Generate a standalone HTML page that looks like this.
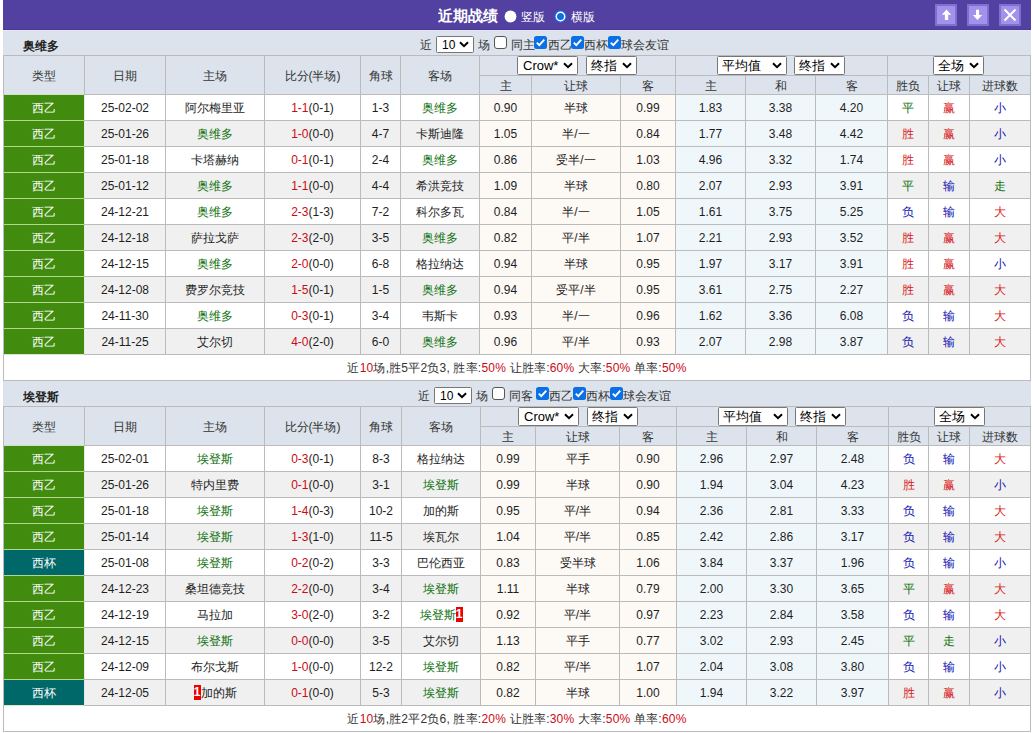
<!DOCTYPE html>
<html><head><meta charset="utf-8"><style>
html,body{margin:0;padding:0;background:#fff;width:1033px;height:733px;overflow:hidden}
body{position:relative;font-family:"Liberation Sans",sans-serif;font-size:12px}
body>div{position:absolute;box-sizing:border-box;white-space:nowrap;overflow:hidden}
.t{white-space:nowrap}
.ic{line-height:0}
svg{display:block}
.sel{background:#fff;border:1px solid #767676;border-radius:1.5px;box-sizing:content-box!important;color:#000}
.rc{display:inline-block;background:#e00;color:#fff;font-weight:bold;width:7px;height:15px;line-height:15px;font-size:12px;vertical-align:middle;text-align:center;overflow:hidden;position:relative;top:-1px}
</style></head><body>
<div style="left:3px;top:0px;width:1028px;height:30px;background:#5241a0"></div>
<div style="left:3px;top:29px;width:1028px;height:1px;background:#4a3a96"></div>
<div style="left:3px;top:30px;width:1028px;height:1px;background:#e6e6fa"></div>
<div class="t" style="left:438px;top:7px;font-weight:bold;font-size:15px;line-height:17px;color:#fff">近期战绩</div>
<div class="ic" style="left:504px;top:10px"><svg width="13" height="13" viewBox="0 0 13 13"><circle cx="6.5" cy="6.5" r="5.9" fill="#fff"/></svg></div>
<div class="t" style="left:521px;top:9px;font-size:12px;line-height:16px;color:#fff">竖版</div>
<div class="ic" style="left:554px;top:10px"><svg width="13" height="13" viewBox="0 0 13 13"><circle cx="6.5" cy="6.5" r="6" fill="#1a6fe0"/><circle cx="6.5" cy="6.5" r="4.9" fill="#fff"/><circle cx="6.5" cy="6.5" r="3.5" fill="#0b6fe6"/></svg></div>
<div class="t" style="left:571px;top:9px;font-size:12px;line-height:16px;color:#fff">横版</div>
<div style="left:935px;top:4px;width:22px;height:22px;background:#7f70cf"></div>
<div style="left:937px;top:6px;width:18px;height:18px;background:#a292ec"></div>
<div class="ic" style="left:935px;top:4px"><svg width="22" height="22" viewBox="0 0 22 22"><path d="M11.5 5.5L16.2 10.8H13.2V16.1H9.9V10.8H6.8Z" fill="#fff"/></svg></div>
<div style="left:967px;top:4px;width:22px;height:22px;background:#7f70cf"></div>
<div style="left:969px;top:6px;width:18px;height:18px;background:#a292ec"></div>
<div class="ic" style="left:967px;top:4px"><svg width="22" height="22" viewBox="0 0 22 22"><path d="M10.5 15.9L15.1 11.1H12V5.8H9V11.1H5.9Z" fill="#fff"/></svg></div>
<div style="left:999px;top:4px;width:22px;height:22px;background:#7f70cf"></div>
<div style="left:1001px;top:6px;width:18px;height:18px;background:#a292ec"></div>
<div class="ic" style="left:999px;top:4px"><svg width="22" height="22" viewBox="0 0 22 22"><path d="M5.5 5.5L16.5 16.5M16.5 5.5L5.5 16.5" stroke="#fff" stroke-width="2"/></svg></div>
<div style="left:3px;top:31px;width:1028px;height:24px;background:#dce3ec"></div>
<div class="t" style="left:23px;top:38px;font-weight:bold;font-size:12px;line-height:16px;color:#222">奥维多</div>
<div class="t" style="left:420px;top:37px;font-size:12px;line-height:16px;color:#333">近</div>
<div class="sel" style="left:436px;top:36px;width:36px;height:15px;font-size:12px;font-family:"Liberation Mono",monospace"><span style="position:absolute;left:5px;top:1px;line-height:15px">10</span><span style="position:absolute;right:4px;top:4px;line-height:0"><svg width="10" height="7" viewBox="0 0 10 7"><path d="M1 1.2L5 5.2L9 1.2" fill="none" stroke="#000" stroke-width="2"/></svg></span></div>
<div class="t" style="left:478px;top:37px;font-size:12px;line-height:16px;color:#333">场</div>
<div class="ic" style="left:494px;top:36px"><svg width="13" height="13" viewBox="0 0 13 13"><rect x="0.5" y="0.5" width="12" height="12" rx="2.5" fill="#fff" stroke="#555" stroke-width="1"/></svg></div>
<div class="t" style="left:511px;top:37px;font-size:12px;line-height:16px;color:#333">同主</div>
<div class="ic" style="left:534px;top:36px"><svg width="13" height="13" viewBox="0 0 13 13"><rect x="0" y="0" width="13" height="13" rx="2.5" fill="#0b6fe6"/><path d="M2.8 6.6L5.3 9.1L10.3 3.6" fill="none" stroke="#fff" stroke-width="1.9"/></svg></div>
<div class="t" style="left:548px;top:37px;font-size:12px;line-height:16px;color:#333">西乙</div>
<div class="ic" style="left:571px;top:36px"><svg width="13" height="13" viewBox="0 0 13 13"><rect x="0" y="0" width="13" height="13" rx="2.5" fill="#0b6fe6"/><path d="M2.8 6.6L5.3 9.1L10.3 3.6" fill="none" stroke="#fff" stroke-width="1.9"/></svg></div>
<div class="t" style="left:584px;top:37px;font-size:12px;line-height:16px;color:#333">西杯</div>
<div class="ic" style="left:608px;top:36px"><svg width="13" height="13" viewBox="0 0 13 13"><rect x="0" y="0" width="13" height="13" rx="2.5" fill="#0b6fe6"/><path d="M2.8 6.6L5.3 9.1L10.3 3.6" fill="none" stroke="#fff" stroke-width="1.9"/></svg></div>
<div class="t" style="left:621px;top:37px;font-size:12px;line-height:16px;color:#333">球会友谊</div>
<div style="left:3px;top:55px;width:1028px;height:326px;background:#bbbbbb"></div>
<div style="left:4px;top:56px;width:80px;height:38px;background:#dce3ec;text-align:center;line-height:40px;color:#333333">类型</div>
<div style="left:85px;top:56px;width:80px;height:38px;background:#dce3ec;text-align:center;line-height:40px;color:#333333">日期</div>
<div style="left:166px;top:56px;width:98px;height:38px;background:#dce3ec;text-align:center;line-height:40px;color:#333333">主场</div>
<div style="left:265px;top:56px;width:95px;height:38px;background:#dce3ec;text-align:center;line-height:40px;color:#333333">比分(半场)</div>
<div style="left:361px;top:56px;width:39px;height:38px;background:#dce3ec;text-align:center;line-height:40px;color:#333333">角球</div>
<div style="left:401px;top:56px;width:78px;height:38px;background:#dce3ec;text-align:center;line-height:40px;color:#333333">客场</div>
<div style="left:480px;top:56px;width:195px;height:19px;background:#dce3ec"></div>
<div style="left:676px;top:56px;width:211px;height:19px;background:#dce3ec"></div>
<div style="left:888px;top:56px;width:142px;height:19px;background:#dce3ec"></div>
<div style="left:480px;top:76px;width:51px;height:18px;background:#dce3ec;text-align:center;line-height:20px;color:#333333">主</div>
<div style="left:532px;top:76px;width:88px;height:18px;background:#dce3ec;text-align:center;line-height:20px;color:#333333">让球</div>
<div style="left:621px;top:76px;width:54px;height:18px;background:#dce3ec;text-align:center;line-height:20px;color:#333333">客</div>
<div style="left:676px;top:76px;width:69px;height:18px;background:#dce3ec;text-align:center;line-height:20px;color:#333333">主</div>
<div style="left:746px;top:76px;width:69px;height:18px;background:#dce3ec;text-align:center;line-height:20px;color:#333333">和</div>
<div style="left:816px;top:76px;width:71px;height:18px;background:#dce3ec;text-align:center;line-height:20px;color:#333333">客</div>
<div style="left:888px;top:76px;width:40px;height:18px;background:#dce3ec;text-align:center;line-height:20px;color:#333333">胜负</div>
<div style="left:929px;top:76px;width:40px;height:18px;background:#dce3ec;text-align:center;line-height:20px;color:#333333">让球</div>
<div style="left:970px;top:76px;width:60px;height:18px;background:#dce3ec;text-align:center;line-height:20px;color:#333333">进球数</div>
<div class="sel" style="left:517px;top:56px;width:59px;height:17px;font-size:13px;font-family:"Liberation Sans",sans-serif"><span style="position:absolute;left:5px;top:0px;line-height:17px">Crow*</span><span style="position:absolute;right:4px;top:5px;line-height:0"><svg width="10" height="7" viewBox="0 0 10 7"><path d="M1 1.2L5 5.2L9 1.2" fill="none" stroke="#000" stroke-width="2"/></svg></span></div>
<div class="sel" style="left:586px;top:56px;width:49px;height:17px;font-size:13px;font-family:"Liberation Sans",sans-serif"><span style="position:absolute;left:4px;top:0px;line-height:17px">终指</span><span style="position:absolute;right:4px;top:5px;line-height:0"><svg width="10" height="7" viewBox="0 0 10 7"><path d="M1 1.2L5 5.2L9 1.2" fill="none" stroke="#000" stroke-width="2"/></svg></span></div>
<div class="sel" style="left:717px;top:56px;width:68px;height:17px;font-size:13px;font-family:"Liberation Sans",sans-serif"><span style="position:absolute;left:4px;top:0px;line-height:17px">平均值</span><span style="position:absolute;right:4px;top:5px;line-height:0"><svg width="10" height="7" viewBox="0 0 10 7"><path d="M1 1.2L5 5.2L9 1.2" fill="none" stroke="#000" stroke-width="2"/></svg></span></div>
<div class="sel" style="left:794px;top:56px;width:49px;height:17px;font-size:13px;font-family:"Liberation Sans",sans-serif"><span style="position:absolute;left:4px;top:0px;line-height:17px">终指</span><span style="position:absolute;right:4px;top:5px;line-height:0"><svg width="10" height="7" viewBox="0 0 10 7"><path d="M1 1.2L5 5.2L9 1.2" fill="none" stroke="#000" stroke-width="2"/></svg></span></div>
<div class="sel" style="left:933px;top:56px;width:49px;height:17px;font-size:13px;font-family:"Liberation Sans",sans-serif"><span style="position:absolute;left:4px;top:0px;line-height:17px">全场</span><span style="position:absolute;right:4px;top:5px;line-height:0"><svg width="10" height="7" viewBox="0 0 10 7"><path d="M1 1.2L5 5.2L9 1.2" fill="none" stroke="#000" stroke-width="2"/></svg></span></div>
<div style="left:4px;top:95px;width:80px;height:25px;background:#418b0e;text-align:center;line-height:27px;color:#ffffff;">西乙</div>
<div style="left:85px;top:95px;width:80px;height:25px;background:#ffffff;text-align:center;line-height:27px;color:#1e1e1e;">25-02-02</div>
<div style="left:166px;top:95px;width:98px;height:25px;background:#ffffff;text-align:center;line-height:27px;color:#1e1e1e;">阿尔梅里亚</div>
<div style="left:265px;top:95px;width:95px;height:25px;background:#ffffff;text-align:center;line-height:27px;color:#1e1e1e;"><span style="color:#cc0a14">1-1</span>(0-1)</div>
<div style="left:361px;top:95px;width:39px;height:25px;background:#ffffff;text-align:center;line-height:27px;color:#1e1e1e;">1-3</div>
<div style="left:401px;top:95px;width:78px;height:25px;background:#ffffff;text-align:center;line-height:27px;color:#1e1e1e;"><span style="color:#0e700e">奥维多</span></div>
<div style="left:480px;top:95px;width:51px;height:25px;background:#fdf9f5;text-align:center;line-height:27px;color:#1e1e1e;">0.90</div>
<div style="left:532px;top:95px;width:88px;height:25px;background:#fdf9f5;text-align:center;line-height:27px;color:#1e1e1e;">半球</div>
<div style="left:621px;top:95px;width:54px;height:25px;background:#fdf9f5;text-align:center;line-height:27px;color:#1e1e1e;">0.99</div>
<div style="left:676px;top:95px;width:69px;height:25px;background:#f0f7fb;text-align:center;line-height:27px;color:#1e1e1e;">1.83</div>
<div style="left:746px;top:95px;width:69px;height:25px;background:#f0f7fb;text-align:center;line-height:27px;color:#1e1e1e;">3.38</div>
<div style="left:816px;top:95px;width:71px;height:25px;background:#f0f7fb;text-align:center;line-height:27px;color:#1e1e1e;">4.20</div>
<div style="left:888px;top:95px;width:40px;height:25px;background:#ffffff;text-align:center;line-height:27px;color:#0e700e;">平</div>
<div style="left:929px;top:95px;width:40px;height:25px;background:#ffffff;text-align:center;line-height:27px;color:#d81818;">赢</div>
<div style="left:970px;top:95px;width:60px;height:25px;background:#ffffff;text-align:center;line-height:27px;color:#1010b0;">小</div>
<div style="left:4px;top:94px;width:80px;height:1px;background:#cfe2c0"></div>
<div style="left:84px;top:95px;width:1px;height:25px;background:#e8e8e8"></div>
<div style="left:4px;top:121px;width:80px;height:25px;background:#418b0e;text-align:center;line-height:27px;color:#ffffff;">西乙</div>
<div style="left:85px;top:121px;width:80px;height:25px;background:#f0f0f0;text-align:center;line-height:27px;color:#1e1e1e;">25-01-26</div>
<div style="left:166px;top:121px;width:98px;height:25px;background:#f0f0f0;text-align:center;line-height:27px;color:#1e1e1e;"><span style="color:#0e700e">奥维多</span></div>
<div style="left:265px;top:121px;width:95px;height:25px;background:#f0f0f0;text-align:center;line-height:27px;color:#1e1e1e;"><span style="color:#cc0a14">1-0</span>(0-0)</div>
<div style="left:361px;top:121px;width:39px;height:25px;background:#f0f0f0;text-align:center;line-height:27px;color:#1e1e1e;">4-7</div>
<div style="left:401px;top:121px;width:78px;height:25px;background:#f0f0f0;text-align:center;line-height:27px;color:#1e1e1e;">卡斯迪隆</div>
<div style="left:480px;top:121px;width:51px;height:25px;background:#fdf9f5;text-align:center;line-height:27px;color:#1e1e1e;">1.05</div>
<div style="left:532px;top:121px;width:88px;height:25px;background:#fdf9f5;text-align:center;line-height:27px;color:#1e1e1e;">半/一</div>
<div style="left:621px;top:121px;width:54px;height:25px;background:#fdf9f5;text-align:center;line-height:27px;color:#1e1e1e;">0.84</div>
<div style="left:676px;top:121px;width:69px;height:25px;background:#f0f7fb;text-align:center;line-height:27px;color:#1e1e1e;">1.77</div>
<div style="left:746px;top:121px;width:69px;height:25px;background:#f0f7fb;text-align:center;line-height:27px;color:#1e1e1e;">3.48</div>
<div style="left:816px;top:121px;width:71px;height:25px;background:#f0f7fb;text-align:center;line-height:27px;color:#1e1e1e;">4.42</div>
<div style="left:888px;top:121px;width:40px;height:25px;background:#f0f0f0;text-align:center;line-height:27px;color:#d81818;">胜</div>
<div style="left:929px;top:121px;width:40px;height:25px;background:#f0f0f0;text-align:center;line-height:27px;color:#d81818;">赢</div>
<div style="left:970px;top:121px;width:60px;height:25px;background:#f0f0f0;text-align:center;line-height:27px;color:#1010b0;">小</div>
<div style="left:4px;top:120px;width:80px;height:1px;background:#aed98f"></div>
<div style="left:84px;top:121px;width:1px;height:25px;background:#e8e8e8"></div>
<div style="left:4px;top:147px;width:80px;height:25px;background:#418b0e;text-align:center;line-height:27px;color:#ffffff;">西乙</div>
<div style="left:85px;top:147px;width:80px;height:25px;background:#ffffff;text-align:center;line-height:27px;color:#1e1e1e;">25-01-18</div>
<div style="left:166px;top:147px;width:98px;height:25px;background:#ffffff;text-align:center;line-height:27px;color:#1e1e1e;">卡塔赫纳</div>
<div style="left:265px;top:147px;width:95px;height:25px;background:#ffffff;text-align:center;line-height:27px;color:#1e1e1e;"><span style="color:#cc0a14">0-1</span>(0-1)</div>
<div style="left:361px;top:147px;width:39px;height:25px;background:#ffffff;text-align:center;line-height:27px;color:#1e1e1e;">2-4</div>
<div style="left:401px;top:147px;width:78px;height:25px;background:#ffffff;text-align:center;line-height:27px;color:#1e1e1e;"><span style="color:#0e700e">奥维多</span></div>
<div style="left:480px;top:147px;width:51px;height:25px;background:#fdf9f5;text-align:center;line-height:27px;color:#1e1e1e;">0.86</div>
<div style="left:532px;top:147px;width:88px;height:25px;background:#fdf9f5;text-align:center;line-height:27px;color:#1e1e1e;">受半/一</div>
<div style="left:621px;top:147px;width:54px;height:25px;background:#fdf9f5;text-align:center;line-height:27px;color:#1e1e1e;">1.03</div>
<div style="left:676px;top:147px;width:69px;height:25px;background:#f0f7fb;text-align:center;line-height:27px;color:#1e1e1e;">4.96</div>
<div style="left:746px;top:147px;width:69px;height:25px;background:#f0f7fb;text-align:center;line-height:27px;color:#1e1e1e;">3.32</div>
<div style="left:816px;top:147px;width:71px;height:25px;background:#f0f7fb;text-align:center;line-height:27px;color:#1e1e1e;">1.74</div>
<div style="left:888px;top:147px;width:40px;height:25px;background:#ffffff;text-align:center;line-height:27px;color:#d81818;">胜</div>
<div style="left:929px;top:147px;width:40px;height:25px;background:#ffffff;text-align:center;line-height:27px;color:#d81818;">赢</div>
<div style="left:970px;top:147px;width:60px;height:25px;background:#ffffff;text-align:center;line-height:27px;color:#1010b0;">小</div>
<div style="left:4px;top:146px;width:80px;height:1px;background:#aed98f"></div>
<div style="left:84px;top:147px;width:1px;height:25px;background:#e8e8e8"></div>
<div style="left:4px;top:173px;width:80px;height:25px;background:#418b0e;text-align:center;line-height:27px;color:#ffffff;">西乙</div>
<div style="left:85px;top:173px;width:80px;height:25px;background:#f0f0f0;text-align:center;line-height:27px;color:#1e1e1e;">25-01-12</div>
<div style="left:166px;top:173px;width:98px;height:25px;background:#f0f0f0;text-align:center;line-height:27px;color:#1e1e1e;"><span style="color:#0e700e">奥维多</span></div>
<div style="left:265px;top:173px;width:95px;height:25px;background:#f0f0f0;text-align:center;line-height:27px;color:#1e1e1e;"><span style="color:#cc0a14">1-1</span>(0-0)</div>
<div style="left:361px;top:173px;width:39px;height:25px;background:#f0f0f0;text-align:center;line-height:27px;color:#1e1e1e;">4-4</div>
<div style="left:401px;top:173px;width:78px;height:25px;background:#f0f0f0;text-align:center;line-height:27px;color:#1e1e1e;">希洪竞技</div>
<div style="left:480px;top:173px;width:51px;height:25px;background:#fdf9f5;text-align:center;line-height:27px;color:#1e1e1e;">1.09</div>
<div style="left:532px;top:173px;width:88px;height:25px;background:#fdf9f5;text-align:center;line-height:27px;color:#1e1e1e;">半球</div>
<div style="left:621px;top:173px;width:54px;height:25px;background:#fdf9f5;text-align:center;line-height:27px;color:#1e1e1e;">0.80</div>
<div style="left:676px;top:173px;width:69px;height:25px;background:#f0f7fb;text-align:center;line-height:27px;color:#1e1e1e;">2.07</div>
<div style="left:746px;top:173px;width:69px;height:25px;background:#f0f7fb;text-align:center;line-height:27px;color:#1e1e1e;">2.93</div>
<div style="left:816px;top:173px;width:71px;height:25px;background:#f0f7fb;text-align:center;line-height:27px;color:#1e1e1e;">3.91</div>
<div style="left:888px;top:173px;width:40px;height:25px;background:#f0f0f0;text-align:center;line-height:27px;color:#0e700e;">平</div>
<div style="left:929px;top:173px;width:40px;height:25px;background:#f0f0f0;text-align:center;line-height:27px;color:#1010b0;">输</div>
<div style="left:970px;top:173px;width:60px;height:25px;background:#f0f0f0;text-align:center;line-height:27px;color:#0e700e;">走</div>
<div style="left:4px;top:172px;width:80px;height:1px;background:#aed98f"></div>
<div style="left:84px;top:173px;width:1px;height:25px;background:#e8e8e8"></div>
<div style="left:4px;top:199px;width:80px;height:25px;background:#418b0e;text-align:center;line-height:27px;color:#ffffff;">西乙</div>
<div style="left:85px;top:199px;width:80px;height:25px;background:#ffffff;text-align:center;line-height:27px;color:#1e1e1e;">24-12-21</div>
<div style="left:166px;top:199px;width:98px;height:25px;background:#ffffff;text-align:center;line-height:27px;color:#1e1e1e;"><span style="color:#0e700e">奥维多</span></div>
<div style="left:265px;top:199px;width:95px;height:25px;background:#ffffff;text-align:center;line-height:27px;color:#1e1e1e;"><span style="color:#cc0a14">2-3</span>(1-3)</div>
<div style="left:361px;top:199px;width:39px;height:25px;background:#ffffff;text-align:center;line-height:27px;color:#1e1e1e;">7-2</div>
<div style="left:401px;top:199px;width:78px;height:25px;background:#ffffff;text-align:center;line-height:27px;color:#1e1e1e;">科尔多瓦</div>
<div style="left:480px;top:199px;width:51px;height:25px;background:#fdf9f5;text-align:center;line-height:27px;color:#1e1e1e;">0.84</div>
<div style="left:532px;top:199px;width:88px;height:25px;background:#fdf9f5;text-align:center;line-height:27px;color:#1e1e1e;">半/一</div>
<div style="left:621px;top:199px;width:54px;height:25px;background:#fdf9f5;text-align:center;line-height:27px;color:#1e1e1e;">1.05</div>
<div style="left:676px;top:199px;width:69px;height:25px;background:#f0f7fb;text-align:center;line-height:27px;color:#1e1e1e;">1.61</div>
<div style="left:746px;top:199px;width:69px;height:25px;background:#f0f7fb;text-align:center;line-height:27px;color:#1e1e1e;">3.75</div>
<div style="left:816px;top:199px;width:71px;height:25px;background:#f0f7fb;text-align:center;line-height:27px;color:#1e1e1e;">5.25</div>
<div style="left:888px;top:199px;width:40px;height:25px;background:#ffffff;text-align:center;line-height:27px;color:#1010b0;">负</div>
<div style="left:929px;top:199px;width:40px;height:25px;background:#ffffff;text-align:center;line-height:27px;color:#1010b0;">输</div>
<div style="left:970px;top:199px;width:60px;height:25px;background:#ffffff;text-align:center;line-height:27px;color:#d81818;">大</div>
<div style="left:4px;top:198px;width:80px;height:1px;background:#aed98f"></div>
<div style="left:84px;top:199px;width:1px;height:25px;background:#e8e8e8"></div>
<div style="left:4px;top:225px;width:80px;height:25px;background:#418b0e;text-align:center;line-height:27px;color:#ffffff;">西乙</div>
<div style="left:85px;top:225px;width:80px;height:25px;background:#f0f0f0;text-align:center;line-height:27px;color:#1e1e1e;">24-12-18</div>
<div style="left:166px;top:225px;width:98px;height:25px;background:#f0f0f0;text-align:center;line-height:27px;color:#1e1e1e;">萨拉戈萨</div>
<div style="left:265px;top:225px;width:95px;height:25px;background:#f0f0f0;text-align:center;line-height:27px;color:#1e1e1e;"><span style="color:#cc0a14">2-3</span>(2-0)</div>
<div style="left:361px;top:225px;width:39px;height:25px;background:#f0f0f0;text-align:center;line-height:27px;color:#1e1e1e;">3-5</div>
<div style="left:401px;top:225px;width:78px;height:25px;background:#f0f0f0;text-align:center;line-height:27px;color:#1e1e1e;"><span style="color:#0e700e">奥维多</span></div>
<div style="left:480px;top:225px;width:51px;height:25px;background:#fdf9f5;text-align:center;line-height:27px;color:#1e1e1e;">0.82</div>
<div style="left:532px;top:225px;width:88px;height:25px;background:#fdf9f5;text-align:center;line-height:27px;color:#1e1e1e;">平/半</div>
<div style="left:621px;top:225px;width:54px;height:25px;background:#fdf9f5;text-align:center;line-height:27px;color:#1e1e1e;">1.07</div>
<div style="left:676px;top:225px;width:69px;height:25px;background:#f0f7fb;text-align:center;line-height:27px;color:#1e1e1e;">2.21</div>
<div style="left:746px;top:225px;width:69px;height:25px;background:#f0f7fb;text-align:center;line-height:27px;color:#1e1e1e;">2.93</div>
<div style="left:816px;top:225px;width:71px;height:25px;background:#f0f7fb;text-align:center;line-height:27px;color:#1e1e1e;">3.52</div>
<div style="left:888px;top:225px;width:40px;height:25px;background:#f0f0f0;text-align:center;line-height:27px;color:#d81818;">胜</div>
<div style="left:929px;top:225px;width:40px;height:25px;background:#f0f0f0;text-align:center;line-height:27px;color:#d81818;">赢</div>
<div style="left:970px;top:225px;width:60px;height:25px;background:#f0f0f0;text-align:center;line-height:27px;color:#d81818;">大</div>
<div style="left:4px;top:224px;width:80px;height:1px;background:#aed98f"></div>
<div style="left:84px;top:225px;width:1px;height:25px;background:#e8e8e8"></div>
<div style="left:4px;top:251px;width:80px;height:25px;background:#418b0e;text-align:center;line-height:27px;color:#ffffff;">西乙</div>
<div style="left:85px;top:251px;width:80px;height:25px;background:#ffffff;text-align:center;line-height:27px;color:#1e1e1e;">24-12-15</div>
<div style="left:166px;top:251px;width:98px;height:25px;background:#ffffff;text-align:center;line-height:27px;color:#1e1e1e;"><span style="color:#0e700e">奥维多</span></div>
<div style="left:265px;top:251px;width:95px;height:25px;background:#ffffff;text-align:center;line-height:27px;color:#1e1e1e;"><span style="color:#cc0a14">2-0</span>(0-0)</div>
<div style="left:361px;top:251px;width:39px;height:25px;background:#ffffff;text-align:center;line-height:27px;color:#1e1e1e;">6-8</div>
<div style="left:401px;top:251px;width:78px;height:25px;background:#ffffff;text-align:center;line-height:27px;color:#1e1e1e;">格拉纳达</div>
<div style="left:480px;top:251px;width:51px;height:25px;background:#fdf9f5;text-align:center;line-height:27px;color:#1e1e1e;">0.94</div>
<div style="left:532px;top:251px;width:88px;height:25px;background:#fdf9f5;text-align:center;line-height:27px;color:#1e1e1e;">半球</div>
<div style="left:621px;top:251px;width:54px;height:25px;background:#fdf9f5;text-align:center;line-height:27px;color:#1e1e1e;">0.95</div>
<div style="left:676px;top:251px;width:69px;height:25px;background:#f0f7fb;text-align:center;line-height:27px;color:#1e1e1e;">1.97</div>
<div style="left:746px;top:251px;width:69px;height:25px;background:#f0f7fb;text-align:center;line-height:27px;color:#1e1e1e;">3.17</div>
<div style="left:816px;top:251px;width:71px;height:25px;background:#f0f7fb;text-align:center;line-height:27px;color:#1e1e1e;">3.91</div>
<div style="left:888px;top:251px;width:40px;height:25px;background:#ffffff;text-align:center;line-height:27px;color:#d81818;">胜</div>
<div style="left:929px;top:251px;width:40px;height:25px;background:#ffffff;text-align:center;line-height:27px;color:#d81818;">赢</div>
<div style="left:970px;top:251px;width:60px;height:25px;background:#ffffff;text-align:center;line-height:27px;color:#1010b0;">小</div>
<div style="left:4px;top:250px;width:80px;height:1px;background:#aed98f"></div>
<div style="left:84px;top:251px;width:1px;height:25px;background:#e8e8e8"></div>
<div style="left:4px;top:277px;width:80px;height:25px;background:#418b0e;text-align:center;line-height:27px;color:#ffffff;">西乙</div>
<div style="left:85px;top:277px;width:80px;height:25px;background:#f0f0f0;text-align:center;line-height:27px;color:#1e1e1e;">24-12-08</div>
<div style="left:166px;top:277px;width:98px;height:25px;background:#f0f0f0;text-align:center;line-height:27px;color:#1e1e1e;">费罗尔竞技</div>
<div style="left:265px;top:277px;width:95px;height:25px;background:#f0f0f0;text-align:center;line-height:27px;color:#1e1e1e;"><span style="color:#cc0a14">1-5</span>(0-1)</div>
<div style="left:361px;top:277px;width:39px;height:25px;background:#f0f0f0;text-align:center;line-height:27px;color:#1e1e1e;">1-5</div>
<div style="left:401px;top:277px;width:78px;height:25px;background:#f0f0f0;text-align:center;line-height:27px;color:#1e1e1e;"><span style="color:#0e700e">奥维多</span></div>
<div style="left:480px;top:277px;width:51px;height:25px;background:#fdf9f5;text-align:center;line-height:27px;color:#1e1e1e;">0.94</div>
<div style="left:532px;top:277px;width:88px;height:25px;background:#fdf9f5;text-align:center;line-height:27px;color:#1e1e1e;">受平/半</div>
<div style="left:621px;top:277px;width:54px;height:25px;background:#fdf9f5;text-align:center;line-height:27px;color:#1e1e1e;">0.95</div>
<div style="left:676px;top:277px;width:69px;height:25px;background:#f0f7fb;text-align:center;line-height:27px;color:#1e1e1e;">3.61</div>
<div style="left:746px;top:277px;width:69px;height:25px;background:#f0f7fb;text-align:center;line-height:27px;color:#1e1e1e;">2.75</div>
<div style="left:816px;top:277px;width:71px;height:25px;background:#f0f7fb;text-align:center;line-height:27px;color:#1e1e1e;">2.27</div>
<div style="left:888px;top:277px;width:40px;height:25px;background:#f0f0f0;text-align:center;line-height:27px;color:#d81818;">胜</div>
<div style="left:929px;top:277px;width:40px;height:25px;background:#f0f0f0;text-align:center;line-height:27px;color:#d81818;">赢</div>
<div style="left:970px;top:277px;width:60px;height:25px;background:#f0f0f0;text-align:center;line-height:27px;color:#d81818;">大</div>
<div style="left:4px;top:276px;width:80px;height:1px;background:#aed98f"></div>
<div style="left:84px;top:277px;width:1px;height:25px;background:#e8e8e8"></div>
<div style="left:4px;top:303px;width:80px;height:25px;background:#418b0e;text-align:center;line-height:27px;color:#ffffff;">西乙</div>
<div style="left:85px;top:303px;width:80px;height:25px;background:#ffffff;text-align:center;line-height:27px;color:#1e1e1e;">24-11-30</div>
<div style="left:166px;top:303px;width:98px;height:25px;background:#ffffff;text-align:center;line-height:27px;color:#1e1e1e;"><span style="color:#0e700e">奥维多</span></div>
<div style="left:265px;top:303px;width:95px;height:25px;background:#ffffff;text-align:center;line-height:27px;color:#1e1e1e;"><span style="color:#cc0a14">0-3</span>(0-1)</div>
<div style="left:361px;top:303px;width:39px;height:25px;background:#ffffff;text-align:center;line-height:27px;color:#1e1e1e;">3-4</div>
<div style="left:401px;top:303px;width:78px;height:25px;background:#ffffff;text-align:center;line-height:27px;color:#1e1e1e;">韦斯卡</div>
<div style="left:480px;top:303px;width:51px;height:25px;background:#fdf9f5;text-align:center;line-height:27px;color:#1e1e1e;">0.93</div>
<div style="left:532px;top:303px;width:88px;height:25px;background:#fdf9f5;text-align:center;line-height:27px;color:#1e1e1e;">半/一</div>
<div style="left:621px;top:303px;width:54px;height:25px;background:#fdf9f5;text-align:center;line-height:27px;color:#1e1e1e;">0.96</div>
<div style="left:676px;top:303px;width:69px;height:25px;background:#f0f7fb;text-align:center;line-height:27px;color:#1e1e1e;">1.62</div>
<div style="left:746px;top:303px;width:69px;height:25px;background:#f0f7fb;text-align:center;line-height:27px;color:#1e1e1e;">3.36</div>
<div style="left:816px;top:303px;width:71px;height:25px;background:#f0f7fb;text-align:center;line-height:27px;color:#1e1e1e;">6.08</div>
<div style="left:888px;top:303px;width:40px;height:25px;background:#ffffff;text-align:center;line-height:27px;color:#1010b0;">负</div>
<div style="left:929px;top:303px;width:40px;height:25px;background:#ffffff;text-align:center;line-height:27px;color:#1010b0;">输</div>
<div style="left:970px;top:303px;width:60px;height:25px;background:#ffffff;text-align:center;line-height:27px;color:#d81818;">大</div>
<div style="left:4px;top:302px;width:80px;height:1px;background:#aed98f"></div>
<div style="left:84px;top:303px;width:1px;height:25px;background:#e8e8e8"></div>
<div style="left:4px;top:329px;width:80px;height:25px;background:#418b0e;text-align:center;line-height:27px;color:#ffffff;">西乙</div>
<div style="left:85px;top:329px;width:80px;height:25px;background:#f0f0f0;text-align:center;line-height:27px;color:#1e1e1e;">24-11-25</div>
<div style="left:166px;top:329px;width:98px;height:25px;background:#f0f0f0;text-align:center;line-height:27px;color:#1e1e1e;">艾尔切</div>
<div style="left:265px;top:329px;width:95px;height:25px;background:#f0f0f0;text-align:center;line-height:27px;color:#1e1e1e;"><span style="color:#cc0a14">4-0</span>(2-0)</div>
<div style="left:361px;top:329px;width:39px;height:25px;background:#f0f0f0;text-align:center;line-height:27px;color:#1e1e1e;">6-0</div>
<div style="left:401px;top:329px;width:78px;height:25px;background:#f0f0f0;text-align:center;line-height:27px;color:#1e1e1e;"><span style="color:#0e700e">奥维多</span></div>
<div style="left:480px;top:329px;width:51px;height:25px;background:#fdf9f5;text-align:center;line-height:27px;color:#1e1e1e;">0.96</div>
<div style="left:532px;top:329px;width:88px;height:25px;background:#fdf9f5;text-align:center;line-height:27px;color:#1e1e1e;">平/半</div>
<div style="left:621px;top:329px;width:54px;height:25px;background:#fdf9f5;text-align:center;line-height:27px;color:#1e1e1e;">0.93</div>
<div style="left:676px;top:329px;width:69px;height:25px;background:#f0f7fb;text-align:center;line-height:27px;color:#1e1e1e;">2.07</div>
<div style="left:746px;top:329px;width:69px;height:25px;background:#f0f7fb;text-align:center;line-height:27px;color:#1e1e1e;">2.98</div>
<div style="left:816px;top:329px;width:71px;height:25px;background:#f0f7fb;text-align:center;line-height:27px;color:#1e1e1e;">3.87</div>
<div style="left:888px;top:329px;width:40px;height:25px;background:#f0f0f0;text-align:center;line-height:27px;color:#1010b0;">负</div>
<div style="left:929px;top:329px;width:40px;height:25px;background:#f0f0f0;text-align:center;line-height:27px;color:#1010b0;">输</div>
<div style="left:970px;top:329px;width:60px;height:25px;background:#f0f0f0;text-align:center;line-height:27px;color:#d81818;">大</div>
<div style="left:4px;top:328px;width:80px;height:1px;background:#aed98f"></div>
<div style="left:84px;top:329px;width:1px;height:25px;background:#e8e8e8"></div>
<div style="left:4px;top:354px;width:80px;height:1px;background:#d8e8cc"></div>
<div style="left:4px;top:355px;width:1026px;height:25px;background:#fff;text-align:center;line-height:27px;color:#333333;white-space:pre;letter-spacing:0.2px"><span style="color:#333333">近</span><span style="color:#cc0a14">10</span><span style="color:#333333">场,胜5平2负3, 胜率:</span><span style="color:#cc0a14">50%</span><span style="color:#333333"> 让胜率:</span><span style="color:#cc0a14">60%</span><span style="color:#333333"> 大率:</span><span style="color:#cc0a14">50%</span><span style="color:#333333"> 单率:</span><span style="color:#cc0a14">50%</span></div>
<div style="left:3px;top:381px;width:1028px;height:25px;background:#dce3ec"></div>
<div class="t" style="left:23px;top:389px;font-weight:bold;font-size:12px;line-height:16px;color:#222">埃登斯</div>
<div class="t" style="left:418px;top:388px;font-size:12px;line-height:16px;color:#333">近</div>
<div class="sel" style="left:434px;top:387px;width:36px;height:15px;font-size:12px;font-family:"Liberation Mono",monospace"><span style="position:absolute;left:5px;top:1px;line-height:15px">10</span><span style="position:absolute;right:4px;top:4px;line-height:0"><svg width="10" height="7" viewBox="0 0 10 7"><path d="M1 1.2L5 5.2L9 1.2" fill="none" stroke="#000" stroke-width="2"/></svg></span></div>
<div class="t" style="left:476px;top:388px;font-size:12px;line-height:16px;color:#333">场</div>
<div class="ic" style="left:492px;top:387px"><svg width="13" height="13" viewBox="0 0 13 13"><rect x="0.5" y="0.5" width="12" height="12" rx="2.5" fill="#fff" stroke="#555" stroke-width="1"/></svg></div>
<div class="t" style="left:509px;top:388px;font-size:12px;line-height:16px;color:#333">同客</div>
<div class="ic" style="left:536px;top:387px"><svg width="13" height="13" viewBox="0 0 13 13"><rect x="0" y="0" width="13" height="13" rx="2.5" fill="#0b6fe6"/><path d="M2.8 6.6L5.3 9.1L10.3 3.6" fill="none" stroke="#fff" stroke-width="1.9"/></svg></div>
<div class="t" style="left:549px;top:388px;font-size:12px;line-height:16px;color:#333">西乙</div>
<div class="ic" style="left:573px;top:387px"><svg width="13" height="13" viewBox="0 0 13 13"><rect x="0" y="0" width="13" height="13" rx="2.5" fill="#0b6fe6"/><path d="M2.8 6.6L5.3 9.1L10.3 3.6" fill="none" stroke="#fff" stroke-width="1.9"/></svg></div>
<div class="t" style="left:586px;top:388px;font-size:12px;line-height:16px;color:#333">西杯</div>
<div class="ic" style="left:610px;top:387px"><svg width="13" height="13" viewBox="0 0 13 13"><rect x="0" y="0" width="13" height="13" rx="2.5" fill="#0b6fe6"/><path d="M2.8 6.6L5.3 9.1L10.3 3.6" fill="none" stroke="#fff" stroke-width="1.9"/></svg></div>
<div class="t" style="left:623px;top:388px;font-size:12px;line-height:16px;color:#333">球会友谊</div>
<div style="left:3px;top:406px;width:1028px;height:326px;background:#bbbbbb"></div>
<div style="left:4px;top:407px;width:80px;height:38px;background:#dce3ec;text-align:center;line-height:40px;color:#333333">类型</div>
<div style="left:85px;top:407px;width:80px;height:38px;background:#dce3ec;text-align:center;line-height:40px;color:#333333">日期</div>
<div style="left:166px;top:407px;width:98px;height:38px;background:#dce3ec;text-align:center;line-height:40px;color:#333333">主场</div>
<div style="left:265px;top:407px;width:95px;height:38px;background:#dce3ec;text-align:center;line-height:40px;color:#333333">比分(半场)</div>
<div style="left:361px;top:407px;width:40px;height:38px;background:#dce3ec;text-align:center;line-height:40px;color:#333333">角球</div>
<div style="left:402px;top:407px;width:78px;height:38px;background:#dce3ec;text-align:center;line-height:40px;color:#333333">客场</div>
<div style="left:481px;top:407px;width:195px;height:19px;background:#dce3ec"></div>
<div style="left:677px;top:407px;width:211px;height:19px;background:#dce3ec"></div>
<div style="left:889px;top:407px;width:141px;height:19px;background:#dce3ec"></div>
<div style="left:481px;top:427px;width:54px;height:18px;background:#dce3ec;text-align:center;line-height:20px;color:#333333">主</div>
<div style="left:536px;top:427px;width:83px;height:18px;background:#dce3ec;text-align:center;line-height:20px;color:#333333">让球</div>
<div style="left:620px;top:427px;width:56px;height:18px;background:#dce3ec;text-align:center;line-height:20px;color:#333333">客</div>
<div style="left:677px;top:427px;width:69px;height:18px;background:#dce3ec;text-align:center;line-height:20px;color:#333333">主</div>
<div style="left:747px;top:427px;width:69px;height:18px;background:#dce3ec;text-align:center;line-height:20px;color:#333333">和</div>
<div style="left:817px;top:427px;width:71px;height:18px;background:#dce3ec;text-align:center;line-height:20px;color:#333333">客</div>
<div style="left:889px;top:427px;width:39px;height:18px;background:#dce3ec;text-align:center;line-height:20px;color:#333333">胜负</div>
<div style="left:929px;top:427px;width:40px;height:18px;background:#dce3ec;text-align:center;line-height:20px;color:#333333">让球</div>
<div style="left:970px;top:427px;width:60px;height:18px;background:#dce3ec;text-align:center;line-height:20px;color:#333333">进球数</div>
<div class="sel" style="left:518px;top:407px;width:59px;height:17px;font-size:13px;font-family:"Liberation Sans",sans-serif"><span style="position:absolute;left:5px;top:0px;line-height:17px">Crow*</span><span style="position:absolute;right:4px;top:5px;line-height:0"><svg width="10" height="7" viewBox="0 0 10 7"><path d="M1 1.2L5 5.2L9 1.2" fill="none" stroke="#000" stroke-width="2"/></svg></span></div>
<div class="sel" style="left:587px;top:407px;width:49px;height:17px;font-size:13px;font-family:"Liberation Sans",sans-serif"><span style="position:absolute;left:4px;top:0px;line-height:17px">终指</span><span style="position:absolute;right:4px;top:5px;line-height:0"><svg width="10" height="7" viewBox="0 0 10 7"><path d="M1 1.2L5 5.2L9 1.2" fill="none" stroke="#000" stroke-width="2"/></svg></span></div>
<div class="sel" style="left:718px;top:407px;width:68px;height:17px;font-size:13px;font-family:"Liberation Sans",sans-serif"><span style="position:absolute;left:4px;top:0px;line-height:17px">平均值</span><span style="position:absolute;right:4px;top:5px;line-height:0"><svg width="10" height="7" viewBox="0 0 10 7"><path d="M1 1.2L5 5.2L9 1.2" fill="none" stroke="#000" stroke-width="2"/></svg></span></div>
<div class="sel" style="left:795px;top:407px;width:49px;height:17px;font-size:13px;font-family:"Liberation Sans",sans-serif"><span style="position:absolute;left:4px;top:0px;line-height:17px">终指</span><span style="position:absolute;right:4px;top:5px;line-height:0"><svg width="10" height="7" viewBox="0 0 10 7"><path d="M1 1.2L5 5.2L9 1.2" fill="none" stroke="#000" stroke-width="2"/></svg></span></div>
<div class="sel" style="left:934px;top:407px;width:49px;height:17px;font-size:13px;font-family:"Liberation Sans",sans-serif"><span style="position:absolute;left:4px;top:0px;line-height:17px">全场</span><span style="position:absolute;right:4px;top:5px;line-height:0"><svg width="10" height="7" viewBox="0 0 10 7"><path d="M1 1.2L5 5.2L9 1.2" fill="none" stroke="#000" stroke-width="2"/></svg></span></div>
<div style="left:4px;top:446px;width:80px;height:25px;background:#418b0e;text-align:center;line-height:27px;color:#ffffff;">西乙</div>
<div style="left:85px;top:446px;width:80px;height:25px;background:#ffffff;text-align:center;line-height:27px;color:#1e1e1e;">25-02-01</div>
<div style="left:166px;top:446px;width:98px;height:25px;background:#ffffff;text-align:center;line-height:27px;color:#1e1e1e;"><span style="color:#0e700e">埃登斯</span></div>
<div style="left:265px;top:446px;width:95px;height:25px;background:#ffffff;text-align:center;line-height:27px;color:#1e1e1e;"><span style="color:#cc0a14">0-3</span>(0-1)</div>
<div style="left:361px;top:446px;width:40px;height:25px;background:#ffffff;text-align:center;line-height:27px;color:#1e1e1e;">8-3</div>
<div style="left:402px;top:446px;width:78px;height:25px;background:#ffffff;text-align:center;line-height:27px;color:#1e1e1e;">格拉纳达</div>
<div style="left:481px;top:446px;width:54px;height:25px;background:#fdf9f5;text-align:center;line-height:27px;color:#1e1e1e;">0.99</div>
<div style="left:536px;top:446px;width:83px;height:25px;background:#fdf9f5;text-align:center;line-height:27px;color:#1e1e1e;">平手</div>
<div style="left:620px;top:446px;width:56px;height:25px;background:#fdf9f5;text-align:center;line-height:27px;color:#1e1e1e;">0.90</div>
<div style="left:677px;top:446px;width:69px;height:25px;background:#f0f7fb;text-align:center;line-height:27px;color:#1e1e1e;">2.96</div>
<div style="left:747px;top:446px;width:69px;height:25px;background:#f0f7fb;text-align:center;line-height:27px;color:#1e1e1e;">2.97</div>
<div style="left:817px;top:446px;width:71px;height:25px;background:#f0f7fb;text-align:center;line-height:27px;color:#1e1e1e;">2.48</div>
<div style="left:889px;top:446px;width:39px;height:25px;background:#ffffff;text-align:center;line-height:27px;color:#1010b0;">负</div>
<div style="left:929px;top:446px;width:40px;height:25px;background:#ffffff;text-align:center;line-height:27px;color:#1010b0;">输</div>
<div style="left:970px;top:446px;width:60px;height:25px;background:#ffffff;text-align:center;line-height:27px;color:#d81818;">大</div>
<div style="left:4px;top:445px;width:80px;height:1px;background:#cfe2c0"></div>
<div style="left:84px;top:446px;width:1px;height:25px;background:#e8e8e8"></div>
<div style="left:4px;top:472px;width:80px;height:25px;background:#418b0e;text-align:center;line-height:27px;color:#ffffff;">西乙</div>
<div style="left:85px;top:472px;width:80px;height:25px;background:#f0f0f0;text-align:center;line-height:27px;color:#1e1e1e;">25-01-26</div>
<div style="left:166px;top:472px;width:98px;height:25px;background:#f0f0f0;text-align:center;line-height:27px;color:#1e1e1e;">特内里费</div>
<div style="left:265px;top:472px;width:95px;height:25px;background:#f0f0f0;text-align:center;line-height:27px;color:#1e1e1e;"><span style="color:#cc0a14">0-1</span>(0-0)</div>
<div style="left:361px;top:472px;width:40px;height:25px;background:#f0f0f0;text-align:center;line-height:27px;color:#1e1e1e;">3-1</div>
<div style="left:402px;top:472px;width:78px;height:25px;background:#f0f0f0;text-align:center;line-height:27px;color:#1e1e1e;"><span style="color:#0e700e">埃登斯</span></div>
<div style="left:481px;top:472px;width:54px;height:25px;background:#fdf9f5;text-align:center;line-height:27px;color:#1e1e1e;">0.99</div>
<div style="left:536px;top:472px;width:83px;height:25px;background:#fdf9f5;text-align:center;line-height:27px;color:#1e1e1e;">半球</div>
<div style="left:620px;top:472px;width:56px;height:25px;background:#fdf9f5;text-align:center;line-height:27px;color:#1e1e1e;">0.90</div>
<div style="left:677px;top:472px;width:69px;height:25px;background:#f0f7fb;text-align:center;line-height:27px;color:#1e1e1e;">1.94</div>
<div style="left:747px;top:472px;width:69px;height:25px;background:#f0f7fb;text-align:center;line-height:27px;color:#1e1e1e;">3.04</div>
<div style="left:817px;top:472px;width:71px;height:25px;background:#f0f7fb;text-align:center;line-height:27px;color:#1e1e1e;">4.23</div>
<div style="left:889px;top:472px;width:39px;height:25px;background:#f0f0f0;text-align:center;line-height:27px;color:#d81818;">胜</div>
<div style="left:929px;top:472px;width:40px;height:25px;background:#f0f0f0;text-align:center;line-height:27px;color:#d81818;">赢</div>
<div style="left:970px;top:472px;width:60px;height:25px;background:#f0f0f0;text-align:center;line-height:27px;color:#1010b0;">小</div>
<div style="left:4px;top:471px;width:80px;height:1px;background:#aed98f"></div>
<div style="left:84px;top:472px;width:1px;height:25px;background:#e8e8e8"></div>
<div style="left:4px;top:498px;width:80px;height:25px;background:#418b0e;text-align:center;line-height:27px;color:#ffffff;">西乙</div>
<div style="left:85px;top:498px;width:80px;height:25px;background:#ffffff;text-align:center;line-height:27px;color:#1e1e1e;">25-01-18</div>
<div style="left:166px;top:498px;width:98px;height:25px;background:#ffffff;text-align:center;line-height:27px;color:#1e1e1e;"><span style="color:#0e700e">埃登斯</span></div>
<div style="left:265px;top:498px;width:95px;height:25px;background:#ffffff;text-align:center;line-height:27px;color:#1e1e1e;"><span style="color:#cc0a14">1-4</span>(0-3)</div>
<div style="left:361px;top:498px;width:40px;height:25px;background:#ffffff;text-align:center;line-height:27px;color:#1e1e1e;">10-2</div>
<div style="left:402px;top:498px;width:78px;height:25px;background:#ffffff;text-align:center;line-height:27px;color:#1e1e1e;">加的斯</div>
<div style="left:481px;top:498px;width:54px;height:25px;background:#fdf9f5;text-align:center;line-height:27px;color:#1e1e1e;">0.95</div>
<div style="left:536px;top:498px;width:83px;height:25px;background:#fdf9f5;text-align:center;line-height:27px;color:#1e1e1e;">平/半</div>
<div style="left:620px;top:498px;width:56px;height:25px;background:#fdf9f5;text-align:center;line-height:27px;color:#1e1e1e;">0.94</div>
<div style="left:677px;top:498px;width:69px;height:25px;background:#f0f7fb;text-align:center;line-height:27px;color:#1e1e1e;">2.36</div>
<div style="left:747px;top:498px;width:69px;height:25px;background:#f0f7fb;text-align:center;line-height:27px;color:#1e1e1e;">2.81</div>
<div style="left:817px;top:498px;width:71px;height:25px;background:#f0f7fb;text-align:center;line-height:27px;color:#1e1e1e;">3.33</div>
<div style="left:889px;top:498px;width:39px;height:25px;background:#ffffff;text-align:center;line-height:27px;color:#1010b0;">负</div>
<div style="left:929px;top:498px;width:40px;height:25px;background:#ffffff;text-align:center;line-height:27px;color:#1010b0;">输</div>
<div style="left:970px;top:498px;width:60px;height:25px;background:#ffffff;text-align:center;line-height:27px;color:#d81818;">大</div>
<div style="left:4px;top:497px;width:80px;height:1px;background:#aed98f"></div>
<div style="left:84px;top:498px;width:1px;height:25px;background:#e8e8e8"></div>
<div style="left:4px;top:524px;width:80px;height:25px;background:#418b0e;text-align:center;line-height:27px;color:#ffffff;">西乙</div>
<div style="left:85px;top:524px;width:80px;height:25px;background:#f0f0f0;text-align:center;line-height:27px;color:#1e1e1e;">25-01-14</div>
<div style="left:166px;top:524px;width:98px;height:25px;background:#f0f0f0;text-align:center;line-height:27px;color:#1e1e1e;"><span style="color:#0e700e">埃登斯</span></div>
<div style="left:265px;top:524px;width:95px;height:25px;background:#f0f0f0;text-align:center;line-height:27px;color:#1e1e1e;"><span style="color:#cc0a14">1-3</span>(1-0)</div>
<div style="left:361px;top:524px;width:40px;height:25px;background:#f0f0f0;text-align:center;line-height:27px;color:#1e1e1e;">11-5</div>
<div style="left:402px;top:524px;width:78px;height:25px;background:#f0f0f0;text-align:center;line-height:27px;color:#1e1e1e;">埃瓦尔</div>
<div style="left:481px;top:524px;width:54px;height:25px;background:#fdf9f5;text-align:center;line-height:27px;color:#1e1e1e;">1.04</div>
<div style="left:536px;top:524px;width:83px;height:25px;background:#fdf9f5;text-align:center;line-height:27px;color:#1e1e1e;">平/半</div>
<div style="left:620px;top:524px;width:56px;height:25px;background:#fdf9f5;text-align:center;line-height:27px;color:#1e1e1e;">0.85</div>
<div style="left:677px;top:524px;width:69px;height:25px;background:#f0f7fb;text-align:center;line-height:27px;color:#1e1e1e;">2.42</div>
<div style="left:747px;top:524px;width:69px;height:25px;background:#f0f7fb;text-align:center;line-height:27px;color:#1e1e1e;">2.86</div>
<div style="left:817px;top:524px;width:71px;height:25px;background:#f0f7fb;text-align:center;line-height:27px;color:#1e1e1e;">3.17</div>
<div style="left:889px;top:524px;width:39px;height:25px;background:#f0f0f0;text-align:center;line-height:27px;color:#1010b0;">负</div>
<div style="left:929px;top:524px;width:40px;height:25px;background:#f0f0f0;text-align:center;line-height:27px;color:#1010b0;">输</div>
<div style="left:970px;top:524px;width:60px;height:25px;background:#f0f0f0;text-align:center;line-height:27px;color:#d81818;">大</div>
<div style="left:4px;top:523px;width:80px;height:1px;background:#aed98f"></div>
<div style="left:84px;top:524px;width:1px;height:25px;background:#e8e8e8"></div>
<div style="left:4px;top:550px;width:80px;height:25px;background:#006868;text-align:center;line-height:27px;color:#ffffff;">西杯</div>
<div style="left:85px;top:550px;width:80px;height:25px;background:#ffffff;text-align:center;line-height:27px;color:#1e1e1e;">25-01-08</div>
<div style="left:166px;top:550px;width:98px;height:25px;background:#ffffff;text-align:center;line-height:27px;color:#1e1e1e;"><span style="color:#0e700e">埃登斯</span></div>
<div style="left:265px;top:550px;width:95px;height:25px;background:#ffffff;text-align:center;line-height:27px;color:#1e1e1e;"><span style="color:#cc0a14">0-2</span>(0-2)</div>
<div style="left:361px;top:550px;width:40px;height:25px;background:#ffffff;text-align:center;line-height:27px;color:#1e1e1e;">3-3</div>
<div style="left:402px;top:550px;width:78px;height:25px;background:#ffffff;text-align:center;line-height:27px;color:#1e1e1e;">巴伦西亚</div>
<div style="left:481px;top:550px;width:54px;height:25px;background:#fdf9f5;text-align:center;line-height:27px;color:#1e1e1e;">0.83</div>
<div style="left:536px;top:550px;width:83px;height:25px;background:#fdf9f5;text-align:center;line-height:27px;color:#1e1e1e;">受半球</div>
<div style="left:620px;top:550px;width:56px;height:25px;background:#fdf9f5;text-align:center;line-height:27px;color:#1e1e1e;">1.06</div>
<div style="left:677px;top:550px;width:69px;height:25px;background:#f0f7fb;text-align:center;line-height:27px;color:#1e1e1e;">3.84</div>
<div style="left:747px;top:550px;width:69px;height:25px;background:#f0f7fb;text-align:center;line-height:27px;color:#1e1e1e;">3.37</div>
<div style="left:817px;top:550px;width:71px;height:25px;background:#f0f7fb;text-align:center;line-height:27px;color:#1e1e1e;">1.96</div>
<div style="left:889px;top:550px;width:39px;height:25px;background:#ffffff;text-align:center;line-height:27px;color:#1010b0;">负</div>
<div style="left:929px;top:550px;width:40px;height:25px;background:#ffffff;text-align:center;line-height:27px;color:#1010b0;">输</div>
<div style="left:970px;top:550px;width:60px;height:25px;background:#ffffff;text-align:center;line-height:27px;color:#1010b0;">小</div>
<div style="left:4px;top:549px;width:80px;height:1px;background:#aed98f"></div>
<div style="left:84px;top:550px;width:1px;height:25px;background:#e8e8e8"></div>
<div style="left:4px;top:576px;width:80px;height:25px;background:#418b0e;text-align:center;line-height:27px;color:#ffffff;">西乙</div>
<div style="left:85px;top:576px;width:80px;height:25px;background:#f0f0f0;text-align:center;line-height:27px;color:#1e1e1e;">24-12-23</div>
<div style="left:166px;top:576px;width:98px;height:25px;background:#f0f0f0;text-align:center;line-height:27px;color:#1e1e1e;">桑坦德竞技</div>
<div style="left:265px;top:576px;width:95px;height:25px;background:#f0f0f0;text-align:center;line-height:27px;color:#1e1e1e;"><span style="color:#cc0a14">2-2</span>(0-0)</div>
<div style="left:361px;top:576px;width:40px;height:25px;background:#f0f0f0;text-align:center;line-height:27px;color:#1e1e1e;">3-4</div>
<div style="left:402px;top:576px;width:78px;height:25px;background:#f0f0f0;text-align:center;line-height:27px;color:#1e1e1e;"><span style="color:#0e700e">埃登斯</span></div>
<div style="left:481px;top:576px;width:54px;height:25px;background:#fdf9f5;text-align:center;line-height:27px;color:#1e1e1e;">1.11</div>
<div style="left:536px;top:576px;width:83px;height:25px;background:#fdf9f5;text-align:center;line-height:27px;color:#1e1e1e;">半球</div>
<div style="left:620px;top:576px;width:56px;height:25px;background:#fdf9f5;text-align:center;line-height:27px;color:#1e1e1e;">0.79</div>
<div style="left:677px;top:576px;width:69px;height:25px;background:#f0f7fb;text-align:center;line-height:27px;color:#1e1e1e;">2.00</div>
<div style="left:747px;top:576px;width:69px;height:25px;background:#f0f7fb;text-align:center;line-height:27px;color:#1e1e1e;">3.30</div>
<div style="left:817px;top:576px;width:71px;height:25px;background:#f0f7fb;text-align:center;line-height:27px;color:#1e1e1e;">3.65</div>
<div style="left:889px;top:576px;width:39px;height:25px;background:#f0f0f0;text-align:center;line-height:27px;color:#0e700e;">平</div>
<div style="left:929px;top:576px;width:40px;height:25px;background:#f0f0f0;text-align:center;line-height:27px;color:#d81818;">赢</div>
<div style="left:970px;top:576px;width:60px;height:25px;background:#f0f0f0;text-align:center;line-height:27px;color:#d81818;">大</div>
<div style="left:4px;top:575px;width:80px;height:1px;background:#aed98f"></div>
<div style="left:84px;top:576px;width:1px;height:25px;background:#e8e8e8"></div>
<div style="left:4px;top:602px;width:80px;height:25px;background:#418b0e;text-align:center;line-height:27px;color:#ffffff;">西乙</div>
<div style="left:85px;top:602px;width:80px;height:25px;background:#ffffff;text-align:center;line-height:27px;color:#1e1e1e;">24-12-19</div>
<div style="left:166px;top:602px;width:98px;height:25px;background:#ffffff;text-align:center;line-height:27px;color:#1e1e1e;">马拉加</div>
<div style="left:265px;top:602px;width:95px;height:25px;background:#ffffff;text-align:center;line-height:27px;color:#1e1e1e;"><span style="color:#cc0a14">3-0</span>(2-0)</div>
<div style="left:361px;top:602px;width:40px;height:25px;background:#ffffff;text-align:center;line-height:27px;color:#1e1e1e;">3-2</div>
<div style="left:402px;top:602px;width:78px;height:25px;background:#ffffff;text-align:center;line-height:27px;color:#1e1e1e;"><span style="color:#0e700e">埃登斯</span><span class="rc">1</span></div>
<div style="left:481px;top:602px;width:54px;height:25px;background:#fdf9f5;text-align:center;line-height:27px;color:#1e1e1e;">0.92</div>
<div style="left:536px;top:602px;width:83px;height:25px;background:#fdf9f5;text-align:center;line-height:27px;color:#1e1e1e;">平/半</div>
<div style="left:620px;top:602px;width:56px;height:25px;background:#fdf9f5;text-align:center;line-height:27px;color:#1e1e1e;">0.97</div>
<div style="left:677px;top:602px;width:69px;height:25px;background:#f0f7fb;text-align:center;line-height:27px;color:#1e1e1e;">2.23</div>
<div style="left:747px;top:602px;width:69px;height:25px;background:#f0f7fb;text-align:center;line-height:27px;color:#1e1e1e;">2.84</div>
<div style="left:817px;top:602px;width:71px;height:25px;background:#f0f7fb;text-align:center;line-height:27px;color:#1e1e1e;">3.58</div>
<div style="left:889px;top:602px;width:39px;height:25px;background:#ffffff;text-align:center;line-height:27px;color:#1010b0;">负</div>
<div style="left:929px;top:602px;width:40px;height:25px;background:#ffffff;text-align:center;line-height:27px;color:#1010b0;">输</div>
<div style="left:970px;top:602px;width:60px;height:25px;background:#ffffff;text-align:center;line-height:27px;color:#d81818;">大</div>
<div style="left:4px;top:601px;width:80px;height:1px;background:#aed98f"></div>
<div style="left:84px;top:602px;width:1px;height:25px;background:#e8e8e8"></div>
<div style="left:4px;top:628px;width:80px;height:25px;background:#418b0e;text-align:center;line-height:27px;color:#ffffff;">西乙</div>
<div style="left:85px;top:628px;width:80px;height:25px;background:#f0f0f0;text-align:center;line-height:27px;color:#1e1e1e;">24-12-15</div>
<div style="left:166px;top:628px;width:98px;height:25px;background:#f0f0f0;text-align:center;line-height:27px;color:#1e1e1e;"><span style="color:#0e700e">埃登斯</span></div>
<div style="left:265px;top:628px;width:95px;height:25px;background:#f0f0f0;text-align:center;line-height:27px;color:#1e1e1e;"><span style="color:#cc0a14">0-0</span>(0-0)</div>
<div style="left:361px;top:628px;width:40px;height:25px;background:#f0f0f0;text-align:center;line-height:27px;color:#1e1e1e;">3-5</div>
<div style="left:402px;top:628px;width:78px;height:25px;background:#f0f0f0;text-align:center;line-height:27px;color:#1e1e1e;">艾尔切</div>
<div style="left:481px;top:628px;width:54px;height:25px;background:#fdf9f5;text-align:center;line-height:27px;color:#1e1e1e;">1.13</div>
<div style="left:536px;top:628px;width:83px;height:25px;background:#fdf9f5;text-align:center;line-height:27px;color:#1e1e1e;">平手</div>
<div style="left:620px;top:628px;width:56px;height:25px;background:#fdf9f5;text-align:center;line-height:27px;color:#1e1e1e;">0.77</div>
<div style="left:677px;top:628px;width:69px;height:25px;background:#f0f7fb;text-align:center;line-height:27px;color:#1e1e1e;">3.02</div>
<div style="left:747px;top:628px;width:69px;height:25px;background:#f0f7fb;text-align:center;line-height:27px;color:#1e1e1e;">2.93</div>
<div style="left:817px;top:628px;width:71px;height:25px;background:#f0f7fb;text-align:center;line-height:27px;color:#1e1e1e;">2.45</div>
<div style="left:889px;top:628px;width:39px;height:25px;background:#f0f0f0;text-align:center;line-height:27px;color:#0e700e;">平</div>
<div style="left:929px;top:628px;width:40px;height:25px;background:#f0f0f0;text-align:center;line-height:27px;color:#0e700e;">走</div>
<div style="left:970px;top:628px;width:60px;height:25px;background:#f0f0f0;text-align:center;line-height:27px;color:#1010b0;">小</div>
<div style="left:4px;top:627px;width:80px;height:1px;background:#aed98f"></div>
<div style="left:84px;top:628px;width:1px;height:25px;background:#e8e8e8"></div>
<div style="left:4px;top:654px;width:80px;height:25px;background:#418b0e;text-align:center;line-height:27px;color:#ffffff;">西乙</div>
<div style="left:85px;top:654px;width:80px;height:25px;background:#ffffff;text-align:center;line-height:27px;color:#1e1e1e;">24-12-09</div>
<div style="left:166px;top:654px;width:98px;height:25px;background:#ffffff;text-align:center;line-height:27px;color:#1e1e1e;">布尔戈斯</div>
<div style="left:265px;top:654px;width:95px;height:25px;background:#ffffff;text-align:center;line-height:27px;color:#1e1e1e;"><span style="color:#cc0a14">1-0</span>(0-0)</div>
<div style="left:361px;top:654px;width:40px;height:25px;background:#ffffff;text-align:center;line-height:27px;color:#1e1e1e;">12-2</div>
<div style="left:402px;top:654px;width:78px;height:25px;background:#ffffff;text-align:center;line-height:27px;color:#1e1e1e;"><span style="color:#0e700e">埃登斯</span></div>
<div style="left:481px;top:654px;width:54px;height:25px;background:#fdf9f5;text-align:center;line-height:27px;color:#1e1e1e;">0.82</div>
<div style="left:536px;top:654px;width:83px;height:25px;background:#fdf9f5;text-align:center;line-height:27px;color:#1e1e1e;">平/半</div>
<div style="left:620px;top:654px;width:56px;height:25px;background:#fdf9f5;text-align:center;line-height:27px;color:#1e1e1e;">1.07</div>
<div style="left:677px;top:654px;width:69px;height:25px;background:#f0f7fb;text-align:center;line-height:27px;color:#1e1e1e;">2.04</div>
<div style="left:747px;top:654px;width:69px;height:25px;background:#f0f7fb;text-align:center;line-height:27px;color:#1e1e1e;">3.08</div>
<div style="left:817px;top:654px;width:71px;height:25px;background:#f0f7fb;text-align:center;line-height:27px;color:#1e1e1e;">3.80</div>
<div style="left:889px;top:654px;width:39px;height:25px;background:#ffffff;text-align:center;line-height:27px;color:#1010b0;">负</div>
<div style="left:929px;top:654px;width:40px;height:25px;background:#ffffff;text-align:center;line-height:27px;color:#1010b0;">输</div>
<div style="left:970px;top:654px;width:60px;height:25px;background:#ffffff;text-align:center;line-height:27px;color:#1010b0;">小</div>
<div style="left:4px;top:653px;width:80px;height:1px;background:#aed98f"></div>
<div style="left:84px;top:654px;width:1px;height:25px;background:#e8e8e8"></div>
<div style="left:4px;top:680px;width:80px;height:25px;background:#006868;text-align:center;line-height:27px;color:#ffffff;">西杯</div>
<div style="left:85px;top:680px;width:80px;height:25px;background:#f0f0f0;text-align:center;line-height:27px;color:#1e1e1e;">24-12-05</div>
<div style="left:166px;top:680px;width:98px;height:25px;background:#f0f0f0;text-align:center;line-height:27px;color:#1e1e1e;"><span class="rc">1</span>加的斯</div>
<div style="left:265px;top:680px;width:95px;height:25px;background:#f0f0f0;text-align:center;line-height:27px;color:#1e1e1e;"><span style="color:#cc0a14">0-1</span>(0-0)</div>
<div style="left:361px;top:680px;width:40px;height:25px;background:#f0f0f0;text-align:center;line-height:27px;color:#1e1e1e;">5-3</div>
<div style="left:402px;top:680px;width:78px;height:25px;background:#f0f0f0;text-align:center;line-height:27px;color:#1e1e1e;"><span style="color:#0e700e">埃登斯</span></div>
<div style="left:481px;top:680px;width:54px;height:25px;background:#fdf9f5;text-align:center;line-height:27px;color:#1e1e1e;">0.82</div>
<div style="left:536px;top:680px;width:83px;height:25px;background:#fdf9f5;text-align:center;line-height:27px;color:#1e1e1e;">半球</div>
<div style="left:620px;top:680px;width:56px;height:25px;background:#fdf9f5;text-align:center;line-height:27px;color:#1e1e1e;">1.00</div>
<div style="left:677px;top:680px;width:69px;height:25px;background:#f0f7fb;text-align:center;line-height:27px;color:#1e1e1e;">1.94</div>
<div style="left:747px;top:680px;width:69px;height:25px;background:#f0f7fb;text-align:center;line-height:27px;color:#1e1e1e;">3.22</div>
<div style="left:817px;top:680px;width:71px;height:25px;background:#f0f7fb;text-align:center;line-height:27px;color:#1e1e1e;">3.97</div>
<div style="left:889px;top:680px;width:39px;height:25px;background:#f0f0f0;text-align:center;line-height:27px;color:#d81818;">胜</div>
<div style="left:929px;top:680px;width:40px;height:25px;background:#f0f0f0;text-align:center;line-height:27px;color:#d81818;">赢</div>
<div style="left:970px;top:680px;width:60px;height:25px;background:#f0f0f0;text-align:center;line-height:27px;color:#1010b0;">小</div>
<div style="left:4px;top:679px;width:80px;height:1px;background:#aed98f"></div>
<div style="left:84px;top:680px;width:1px;height:25px;background:#e8e8e8"></div>
<div style="left:4px;top:705px;width:80px;height:1px;background:#d8e8cc"></div>
<div style="left:4px;top:706px;width:1026px;height:25px;background:#fff;text-align:center;line-height:27px;color:#333333;white-space:pre;letter-spacing:0.2px"><span style="color:#333333">近</span><span style="color:#cc0a14">10</span><span style="color:#333333">场,胜2平2负6, 胜率:</span><span style="color:#cc0a14">20%</span><span style="color:#333333"> 让胜率:</span><span style="color:#cc0a14">30%</span><span style="color:#333333"> 大率:</span><span style="color:#cc0a14">50%</span><span style="color:#333333"> 单率:</span><span style="color:#cc0a14">60%</span></div>
</body></html>
